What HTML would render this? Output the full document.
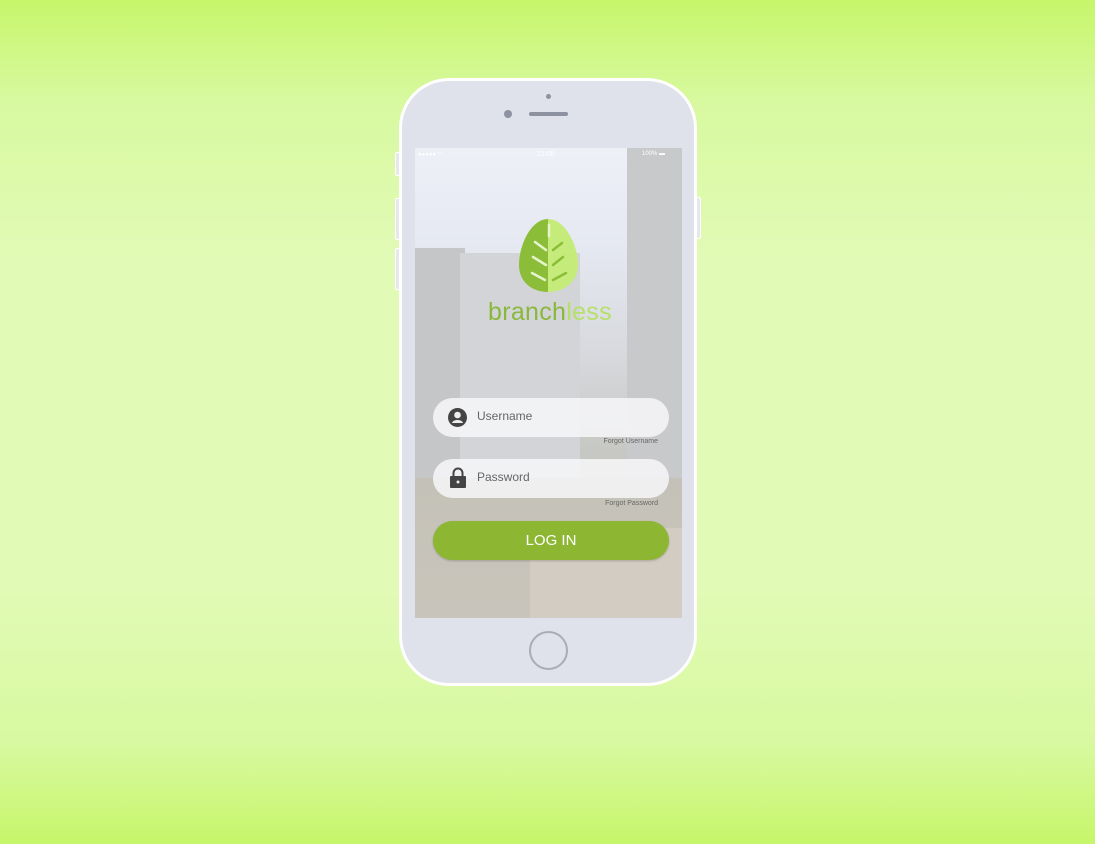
<!DOCTYPE html>
<html><head><meta charset="utf-8"><style>
body{margin:0;width:1095px;height:844px;overflow:hidden;background:linear-gradient(#c6f66a 0%,#d8f9a0 12%,#e1fab5 30%,#e1fab5 70%,#d8f9a0 88%,#c6f66a 100%);font-family:"Liberation Sans",sans-serif;position:relative}
.abs{position:absolute}
.phone{left:399px;top:78px;width:292px;height:602px;border:3px solid #fff;border-radius:50px;background:#dfe2ea}
.btn{background:#e6e8ee;border:1px solid #fff;width:3px}
.screen{left:415px;top:148px;width:267px;height:470px;overflow:hidden;background:linear-gradient(#eef0f8 0%,#e6e9f2 20%,#d6d8dc 45%,#c9cbc8 60%,#c2c2bc 75%,#cfc8be 100%)}
.field{left:433px;width:236px;height:39px;border-radius:20px;background:rgba(247,247,249,0.85)}
.field span{position:absolute;left:44px;top:11px;font-size:12px;color:#666}
.forgot{font-size:7px;color:#666;right:437px;text-align:right}
</style></head><body>
<div class="abs btn" style="left:395px;top:152px;height:22px;border-radius:2px 0 0 2px"></div>
<div class="abs btn" style="left:395px;top:198px;height:40px;border-radius:2px 0 0 2px"></div>
<div class="abs btn" style="left:395px;top:248px;height:40px;border-radius:2px 0 0 2px"></div>
<div class="abs btn" style="left:696px;top:197px;height:40px;border-radius:0 2px 2px 0"></div>
<div class="abs phone"></div>
<div class="abs" style="left:546px;top:94px;width:5px;height:5px;border-radius:50%;background:#8e919f"></div>
<div class="abs" style="left:504px;top:110px;width:8px;height:8px;border-radius:50%;background:#8e919f"></div>
<div class="abs" style="left:529px;top:112px;width:39px;height:4px;border-radius:2px;background:#8e919f"></div>
<div class="abs" style="left:529px;top:631px;width:35px;height:35px;border-radius:50%;border:2px solid #a9acb8"></div>
<div class="abs screen">
 <div class="abs" style="left:0;top:100px;width:50px;height:370px;background:#c5c6c8"></div>
 <div class="abs" style="left:45px;top:105px;width:120px;height:260px;background:#d2d4d8"></div>
 <div class="abs" style="left:212px;top:0;width:55px;height:370px;background:#c8c9cb"></div>
 <div class="abs" style="left:0;top:330px;width:267px;height:140px;background:linear-gradient(#c4c2b8,#c9c4bb)"></div>
 <div class="abs" style="left:115px;top:380px;width:152px;height:90px;background:#d3ccc2"></div>
 <div class="abs" style="left:3px;top:3px;font-size:6px;color:#fff">●●●●● ◠</div>
 <div class="abs" style="left:122px;top:3px;font-size:7px;color:#fff">21:00</div>
 <div class="abs" style="left:227px;top:3px;font-size:6px;color:#fff">100% ▬</div>
</div>
<svg class="abs" style="left:0;top:0" width="1095" height="844">
<path d="M548 219 L548 292 C532 292 519 282 519 265 C519 245 531 219 548 219Z" fill="#8bbd38"/>
<path d="M548 219 C565 219 578 245 578 265 C578 282 564 292 548 292Z" fill="#c5ec7a"/>
<g stroke-width="2.5" stroke-linecap="round">
<g stroke="#e6f4cc"><line x1="549" y1="225" x2="549" y2="236"/><line x1="535" y1="242" x2="546" y2="250"/><line x1="533" y1="257" x2="546" y2="265"/><line x1="532" y1="273" x2="545" y2="280"/></g>
<g stroke="#8bbd38"><line x1="553" y1="250" x2="562" y2="243"/><line x1="553" y1="265" x2="563" y2="257"/><line x1="553" y1="280" x2="566" y2="273"/></g>
</g>
</svg>
<div class="abs" style="left:488px;top:298px;font-size:25px;letter-spacing:0.3px;color:#8ab83a">branch<span style="color:#b6e06a">less</span></div>
<div class="abs field" style="top:398px"><svg class="abs" style="left:15px;top:10px" width="19" height="19"><circle cx="9.5" cy="9.5" r="9.5" fill="#444"/><circle cx="9.5" cy="7" r="3.3" fill="#eee"/><path d="M4 15 C5 11 14 11 15 15 Z" fill="#eee"/></svg><span>Username</span></div>
<div class="abs forgot" style="top:438px;right:437px">Forgot Username</div>
<div class="abs field" style="top:459px"><svg class="abs" style="left:16px;top:8px" width="18" height="22"><path d="M4.5 9 V6 a4.5 4.5 0 0 1 9 0 V9" fill="none" stroke="#444" stroke-width="2"/><rect x="1" y="9" width="16" height="12" rx="1" fill="#444"/><circle cx="9" cy="15" r="1.5" fill="#eee"/></svg><span>Password</span></div>
<div class="abs forgot" style="top:500px;right:437px">Forgot Password</div>
<div class="abs" style="left:433px;top:521px;width:236px;height:39px;border-radius:20px;background:#8db733;box-shadow:0 1px 2px rgba(0,0,0,0.2);color:#fff;font-size:15px;text-align:center;line-height:39px">LOG IN</div>
</body></html>
